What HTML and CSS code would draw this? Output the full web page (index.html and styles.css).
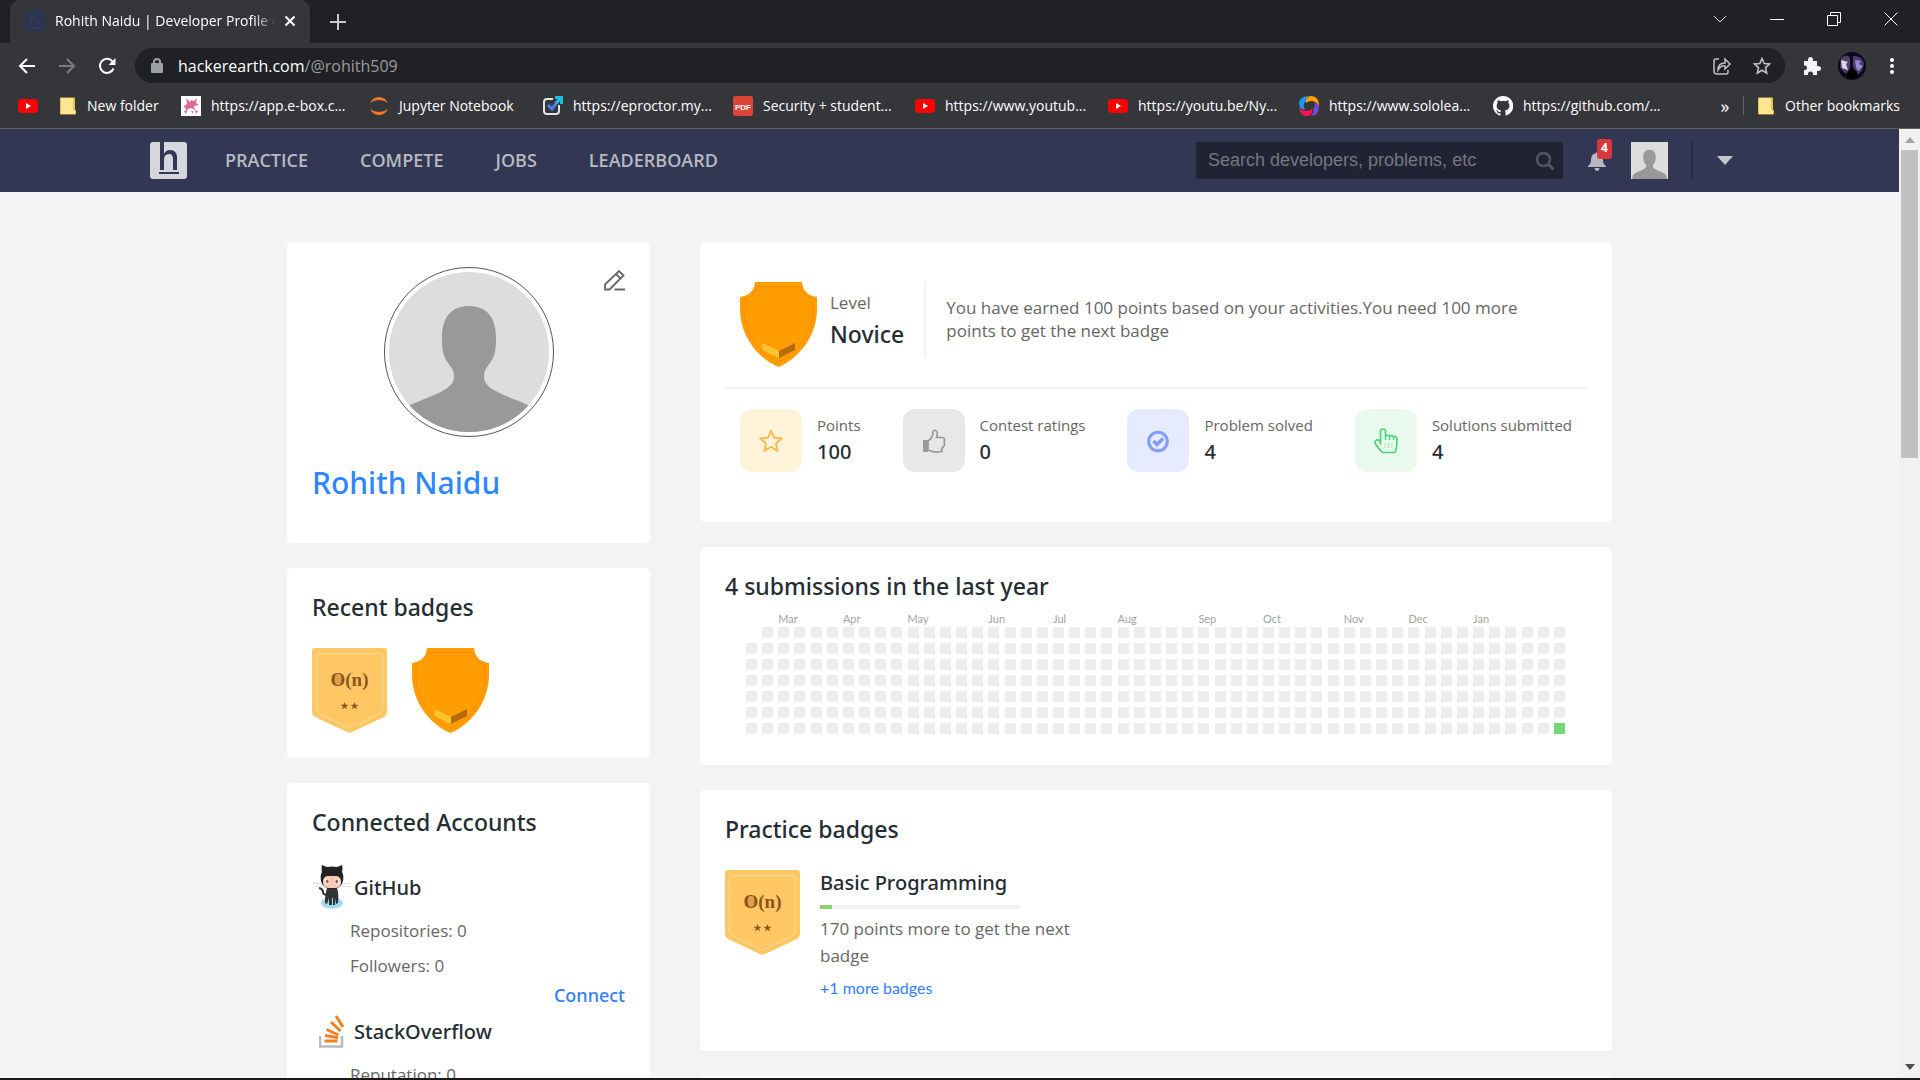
FILE: index.html
```html
<!DOCTYPE html>
<html lang="en">
<head>
<meta charset="utf-8">
<title>Rohith Naidu | Developer Profile</title>
<link rel="stylesheet" href="styles.css">
</head>
<body>
<svg class="defs" aria-hidden="true">
  <symbol id="youtube" viewBox="0 0 20 20"><rect y="3" width="20" height="14" rx="4" fill="#f00"/><path d="M8 7l5 3-5 3z" fill="#fff"/></symbol>
  <symbol id="folder" viewBox="0 0 16 18"><path d="M1 .5h13q1 0 1 1v11l1 1v3q0 1-1 1H1q-1 0-1-1v-15q0-1 1-1z" fill="#e8c34c"/><path d="M1 1h12v16H1z" fill="#ffe693"/><path d="M12.500 13h2.500v4h-2.500z" fill="#ffe693"/></symbol>
  <symbol id="person" viewBox="0 0 160 160"><path fill="#ddd" d="M0 0h160v160H0z"/><path fill="#999" d="M80 34c-20 0-27 14-27 32 0 12 1 18 6 25s6 8 6 14c0 12-18 17-44 28C10 138 6 146 5 160h150c-1-14-5-22-16-27-26-11-44-16-44-28 0-6 1-7 6-14s6-13 6-25c0-18-7-32-27-32z"/></symbol>
  <symbol id="shield" viewBox="0 0 77 85"><path fill="#ff9d03" d="M15 0h47q1 13 15 15v12c0 26-17 49-38.500 58C17 76 0 53 0 27V15Q14 13 15 0z"/><path fill="none" stroke="#f08f04" d="M17 4.500h43q2 10 13 12.500v11c0 23-15 43-34.500 52.500C19 71 4 51 4 28V17q11-2 13-12.500z"/><path fill="#f9c332" d="M22.500 61L39 69v7l-16.500-8z"/><path fill="#b66b08" d="M55 61l-16 8v7l16-8z"/></symbol>
  <symbol id="on-badge" viewBox="0 0 75 85"><path fill="#ffc664" d="M3 0h69q3 0 3 3v61q0 3-3 5L40 84q-2.500 1.500-5 0L3 69q-3-2-3-5V3q0-3 3-3z"/><path fill="none" stroke="#ffdc9c" d="M8 5.500h59q3.500 0 3.500 3.500v51q0 4-3.500 6L37.500 80 8 66q-3.500-2-3.500-6V9q0-3.500 3.500-3.500z"/><path fill="#e0a04a" d="M25 26q4 0 4 6t-4 6-4-6 4-6z"/><text x="37.500" y="38" text-anchor="middle" class="badge-text">O(n)</text><path fill="#8a561b" d="M32.500 54l1 2.800h3l-2.400 1.700.9 2.800-2.500-1.700-2.500 1.700.9-2.800-2.400-1.700h3zM42.500 54l1 2.800h3l-2.400 1.700.9 2.800-2.500-1.700-2.500 1.700.9-2.800-2.400-1.700h3z"/></symbol>
</svg>

<div class="tabstrip">
  <div class="tab">
    <svg class="favicon" viewBox="0 0 20 20"><rect width="20" height="20" rx="2" fill="#2c3454"/><path d="M6.500 2v12M6.500 9q0-3 3.500-3t3.500 3v5M6 17h8" fill="none" stroke="#363a4c" stroke-width="2"/></svg>
    <span class="tab-title">Rohith Naidu | Developer Profile on</span>
    <button class="plain" aria-label="Close tab"><svg width="12" height="12" viewBox="0 0 12 12"><path d="M1.500 1.500l9 9m0-9l-9 9" stroke="#fff" stroke-width="2"/></svg></button>
  </div>
  <button class="plain new-tab" aria-label="New tab"><svg width="16" height="16" viewBox="0 0 16 16"><path d="M8 0v16M0 8h16" stroke="#c8cacd" stroke-width="2"/></svg></button>
  <div class="window-controls">
    <button class="plain" aria-label="Search tabs"><svg width="14" height="14" viewBox="0 0 14 14"><path d="M1 4l6 6 6-6" fill="none" stroke="#ddd"/></svg></button>
    <button class="plain" aria-label="Minimize"><svg width="14" height="14" viewBox="0 0 14 14"><path d="M0 7.500h14" stroke="#fff"/></svg></button>
    <button class="plain" aria-label="Restore"><svg width="14" height="14" viewBox="0 0 14 14"><path d="M.5 3.500h10v10H.5zM3.500 3V.5h10v10H11" fill="none" stroke="#fff"/></svg></button>
    <button class="plain" aria-label="Close"><svg width="14" height="14" viewBox="0 0 14 14"><path d="M.5.500l13 13m0-13l-13 13" stroke="#fff"/></svg></button>
  </div>
</div>

<div class="toolbar">
  <div class="nav-buttons">
    <button class="plain" aria-label="Back"><svg width="18" height="16" viewBox="0 0 18 16"><path d="M17 8H2m7-7L2 8l7 7" fill="none" stroke="#fff" stroke-width="2"/></svg></button>
    <button class="plain" aria-label="Forward"><svg width="18" height="16" viewBox="0 0 18 16"><path d="M1 8h15M9 1l7 7-7 7" fill="none" stroke="#7c7e81" stroke-width="2"/></svg></button>
    <button class="plain" aria-label="Reload"><svg width="18" height="18" viewBox="0 0 18 18"><path d="M15.500 11.500A7 7 0 1 1 14.500 4.500" fill="none" stroke="#fff" stroke-width="2"/><path d="M17.500 1v7h-7z" fill="#fff"/></svg></button>
  </div>
  <div class="omnibox">
    <svg width="12" height="16" viewBox="0 0 12 16"><rect y="5" width="12" height="10" rx="1" fill="#9aa0a6"/><path d="M3 6V4q0-3 3-3t3 3v2" fill="none" stroke="#9aa0a6" stroke-width="2"/></svg>
    <span class="url">hackerearth.com<span class="path">/@rohith509</span></span>
    <button class="plain" aria-label="Share"><svg width="20" height="18" viewBox="0 0 20 18"><path d="M7 2H4Q2 2 2 4v10q0 3 3 3h9q2 0 2-2v-2M6 13q0-7 7-7V2l5 5-5 5V9q-4-1-7 4z" fill="none" stroke="#bdc1c6" stroke-width="1.500"/></svg></button>
    <button class="plain" aria-label="Bookmark this page"><svg width="18" height="18" viewBox="0 0 18 18"><path d="M9 1.500l2.200 5 5.300.5-4 3.600 1.200 5.400L9 13.200 4.300 16l1.200-5.400-4-3.600 5.300-.5z" fill="none" stroke="#bdc1c6" stroke-width="1.600"/></svg></button>
  </div>
  <button class="plain" aria-label="Extensions"><svg width="20" height="20" viewBox="0 0 20 20"><path d="M2 5h4V4q0-3 2.500-3T11 4v1h4v5h1q3 0 3 2.500T16 15h-1v4h-4v-1q0-2.500-2.500-2.500T6 18v1H2v-5h1q2 0 2-2.200T3 9.500H2z" fill="#f1f3f4"/></svg></button>
  <button class="plain" aria-label="Account"><svg width="28" height="28" viewBox="0 0 28 28"><circle cx="14" cy="14" r="14" fill="#0e0a1c"/><path d="M3 6q6-5 9 0v9q-1 7-5 6l-5-5z" fill="#4b4468"/><path d="M3 8l7 2-2 2 2 6-6-2z" fill="#e4d3e6"/><path d="M15 4q8-1 11 7-1 10-8 12l-3-9z" fill="#4b3d7c"/><path d="M17 8l6 1-2 3 4 2-5 5-2-4z" fill="#9a8ccc"/><path d="M9 27q-1-10 5-10t6 9z" fill="#000"/></svg></button>
  <button class="plain" aria-label="Menu"><svg width="4" height="16" viewBox="0 0 4 16"><circle cx="2" cy="2" r="2" fill="#fff"/><circle cx="2" cy="8" r="2" fill="#fff"/><circle cx="2" cy="14" r="2" fill="#fff"/></svg></button>
</div>

<nav class="bookmarks" aria-label="Bookmarks">
  <a href="#" aria-label="YouTube"><svg><use href="#youtube"/></svg></a>
  <a href="#"><svg class="folder"><use href="#folder"/></svg>New folder</a>
  <a href="#"><svg viewBox="0 0 20 20"><path fill="#fff" d="M0 0h20v20H0z"/><path d="M5 2l4 4 1-2 3 1 3-3-1 5 3 2-5 1 1 4-4-2-3 1-3 4 1-5-3-1 4-3zM14 14l3 1-2 3zM3 15h3l-1 3zM10 15h2v3z" fill="#dd6c90"/></svg>https://app.e-box.c...</a>
  <a href="#"><svg viewBox="0 0 20 20"><path d="M1 7Q4 1 10 1t9 6q-4-3-9-3T1 7zM1 13q3 6 9 6t9-6q-4 3-9 3t-9-3z" fill="#f37726"/></svg>Jupyter Notebook</a>
  <a href="#"><svg viewBox="0 0 20 20"><path d="M10 3H4Q1 3 1 6v9q0 3 3 3h9q3 0 3-3V9" fill="none" stroke="#e4e4e6" stroke-width="2"/><path d="M5 9l4 4 6-8" fill="none" stroke="#507bed" stroke-width="3"/><path d="M12 0h8v8h-3V5l-3 3-2-2 3-3h-3z" fill="#19c3e8"/></svg>https://eproctor.my...</a>
  <a href="#"><svg viewBox="0 0 20 20"><rect width="20" height="20" rx="2" fill="#db4437"/><text x="10" y="14" text-anchor="middle" class="pdf-text">PDF</text></svg>Security + student...</a>
  <a href="#"><svg><use href="#youtube"/></svg>https://www.youtub...</a>
  <a href="#"><svg><use href="#youtube"/></svg>https://youtu.be/Ny...</a>
  <a href="#"><svg viewBox="0 0 20 20"><path d="M9 0Q0 1 0 7.500q0 5 6 6.500-3-6 1-9 0-3 2-5z" fill="#2196f3"/><path d="M7 4q1-4 5-4 7 0 8 8v2q-3-5-8-5-3 0-5 2z" fill="#ffa000"/><path d="M15 7q5 0 5 5 0 7-8 8 3-3 2-7 3-3 1-6z" fill="#7248d2"/><path d="M0 11q3 4 7 4 4 0 6-2 1 7-5 7-7 0-8-9z" fill="#ff1156"/></svg>https://www.sololea...</a>
  <a href="#"><svg viewBox="0 0 16 16"><path fill="#fff" d="M8 0C3.580 0 0 3.580 0 8c0 3.540 2.290 6.530 5.470 7.590.4.070.55-.17.55-.38v-1.340c-2.230.48-2.690-1.070-2.690-1.070-.36-.92-.89-1.170-.89-1.170-.73-.5.050-.49.050-.49.810.060 1.230.83 1.230.83.720 1.230 1.890.87 2.350.67.070-.52.280-.87.510-1.070-1.780-.2-3.640-.89-3.640-3.950 0-.87.310-1.590.820-2.150-.08-.2-.36-1.020.080-2.120 0 0 .67-.21 2.200.82a7.600 7.600 0 0 1 4 0c1.530-1.040 2.200-.82 2.200-.82.440 1.100.160 1.920.080 2.120.510.560.820 1.270.820 2.150 0 3.070-1.870 3.750-3.650 3.950.290.250.540.730.540 1.480v2.200c0 .21.150.46.550.38A8 8 0 0 0 8 0z"/></svg>https://github.com/...</a>
  <button class="plain more" aria-label="More bookmarks">»</button>
  <a href="#" class="other"><svg class="folder"><use href="#folder"/></svg>Other bookmarks</a>
</nav>

<div class="viewport">
  <div class="page">
    <header class="site-header">
      <a href="#" class="logo" aria-label="HackerEarth"><svg width="37" height="37" viewBox="0 0 37 37"><rect width="37" height="37" rx="3" fill="#d6d7de"/><path d="M10 0h4v12q2-4 6-4 7 0 7 8v12h-4V17q0-5-4-5-5 0-5 6v10h-4z" fill="#323754"/><path d="M9 30h20v2H9z" fill="#323754"/></svg></a>
      <nav class="site-nav"><a href="#">PRACTICE</a><a href="#">COMPETE</a><a href="#">JOBS</a><a href="#">LEADERBOARD</a></nav>
      <form class="search">
        <input type="text" aria-label="Search" placeholder="Search developers, problems, etc">
        <button class="plain" type="button" aria-label="Submit search"><svg width="20" height="20" viewBox="0 0 20 20"><circle cx="8.500" cy="8.500" r="6.500" fill="none" stroke="#4e5864" stroke-width="2.500"/><path d="M13 13l5.500 5.500" stroke="#4e5864" stroke-width="3"/></svg></button>
      </form>
      <button class="plain bell" aria-label="Notifications"><svg width="18" height="20" viewBox="0 0 18 20"><path d="M9 1q1 0 1.500 1.500Q15 3 15 9q0 4 3 6v1H0v-1q3-2 3-6 0-6 4.500-6.500Q8 1 9 1zM6.500 17h5q-.5 3-2.500 3t-2.500-3z" fill="#b7b9c2"/></svg><span class="count">4</span></button>
      <a href="#" class="me" aria-label="My profile"><svg width="37" height="37"><use href="#person"/></svg></a>
      <button class="plain caret" aria-label="Account menu"><svg width="16" height="9" viewBox="0 0 16 9"><path d="M0 0h16L8 9z" fill="#c4c6cd"/></svg></button>
    </header>

    <main class="columns">
      <div class="left">
        <section class="card profile">
          <div class="portrait"><svg><use href="#person"/></svg></div>
          <button class="plain edit" aria-label="Edit profile"><svg width="21" height="21" viewBox="0 0 21 21"><path d="M1 19.500v-5L15 1l4.500 4.500-14 14zM12 4l4.500 4.500M10.500 19.500H21" fill="none" stroke="#666" stroke-width="1.800"/></svg></button>
          <h1>Rohith Naidu</h1>
        </section>
        <section class="card">
          <h2>Recent badges</h2>
          <div class="badges"><svg width="75" height="85"><use href="#on-badge"/></svg><svg width="77" height="85"><use href="#shield"/></svg></div>
        </section>
        <section class="card accounts">
          <h2>Connected Accounts</h2>
          <h3><span class="account-icon"><svg width="38" height="44" viewBox="0 0 38 44"><ellipse cx="19" cy="38" rx="11" ry="5.500" fill="#9cdaf1"/><path d="M0 18l9 1M0 22l9-1M38 18l-9 1M38 22l-9-1" stroke="#ddd"/><path d="M6 23q4 1 4 4t5 3" fill="none" stroke="#333" stroke-width="2"/><path d="M14 23h10q2 6 1 15l-2 1-1-6v7h-2v-7h-1v7h-3v-7l-2 6-2-1q0-9 2-15z" fill="#333"/><path d="M9 0l5 2q5-1 10 0l5-2q1 4 0 7 2 3 1 9-2 8-11 8T8 16q-1-6 1-9-1-3 0-7z" fill="#222"/><rect x="10" y="11" width="18" height="12" rx="5" fill="#f4cbb2"/><ellipse cx="14" cy="16.500" rx="2" ry="3" fill="#fff"/><ellipse cx="24" cy="16.500" rx="2" ry="3" fill="#fff"/><ellipse cx="14.300" cy="16.500" rx="1.300" ry="2" fill="#a35757"/><ellipse cx="23.700" cy="16.500" rx="1.300" ry="2" fill="#a35757"/></svg></span>GitHub</h3>
          <p>Repositories: 0</p>
          <p>Followers: 0</p>
          <a href="#" class="connect">Connect</a>
          <h3><span class="account-icon"><svg width="26" height="33" viewBox="0 0 26 33"><path d="M1 21v10.500h22V21" fill="none" stroke="#bcbbbb" stroke-width="2.500"/><path d="M5.500 26h13M6 20.500l13 2.200M7.500 14.500l12 5.500M12 7l9.500 9M17 1l7 11" stroke="#f48024" stroke-width="3"/></svg></span>StackOverflow</h3>
          <p>Reputation: 0</p>
        </section>
      </div>

      <div class="right">
        <section class="card summary">
          <div class="level">
            <svg width="77" height="85"><use href="#shield"/></svg>
            <div class="level-name"><span>Level</span><strong>Novice</strong></div>
            <p>You have earned 100 points based on your activities.You need 100 more points to get the next badge</p>
          </div>
          <dl class="stats">
            <div class="stat">
              <span class="tile star"><svg width="24" height="24" viewBox="0 0 24 24"><path d="M12 2l3.100 6.700 7.400.8-5.500 5 1.500 7.300-6.500-3.700-6.500 3.700L7 14.500l-5.500-5 7.400-.8z" fill="none" stroke="#fdb43f" stroke-width="1.700"/></svg></span>
              <div><dt>Points</dt><dd>100</dd></div>
            </div>
            <div class="stat">
              <span class="tile thumb"><svg width="24" height="24" viewBox="0 0 24 24"><path d="M1 11h5v12H1z" fill="#999"/><path d="M6 12q5-3 5-9 0-2 2.500-1.500 3 1 1 7H20q3 0 2.500 3-.5 1 0 3T21 18t-1 3-3 2Q11 23.500 6 21z" fill="none" stroke="#999" stroke-width="1.700"/></svg></span>
              <div><dt>Contest ratings</dt><dd>0</dd></div>
            </div>
            <div class="stat">
              <span class="tile check"><svg width="24" height="24" viewBox="0 0 24 24"><circle cx="12" cy="12.500" r="9.300" fill="none" stroke="#829cff" stroke-width="3"/><path d="M7.500 12l3.500 3.500 6-6" fill="none" stroke="#829cff" stroke-width="3.500"/></svg></span>
              <div><dt>Problem solved</dt><dd>4</dd></div>
            </div>
            <div class="stat">
              <span class="tile hand"><svg width="24" height="26" viewBox="0 0 24 26"><path d="M6.500 16V3q0-2 2.500-2t2.500 2v5q3-1.500 4 0 3-1 4 .5 4-.5 3.500 3.500 0 8-2 12.500H8.500Q4 20 1.500 16 0 12.500 3 12t3.500 4z" fill="none" stroke="#4bd576" stroke-width="1.700" stroke-linejoin="round"/><path d="M11.500 8v4m4-4v4m4-3.500V12" stroke="#4bd576" stroke-width="1.500"/><path d="M11 15v5m3.500-5v5m3.500-5v5" stroke="#a8e8bb"/></svg></span>
              <div><dt>Solutions submitted</dt><dd>4</dd></div>
            </div>
          </dl>
        </section>

        <section class="card">
          <h2>4 submissions in the last year</h2>
          <div class="calendar" id="calendar"></div>
        </section>

        <section class="card practice">
          <h2>Practice badges</h2>
          <div class="practice-badge">
            <svg width="75" height="85"><use href="#on-badge"/></svg>
            <div class="practice-info">
              <h3>Basic Programming</h3>
              <div class="progress"><div style="width:6%"></div></div>
              <p>170 points more to get the next badge</p>
              <a href="#">+1 more badges</a>
            </div>
          </div>
        </section>
        <section class="card next"></section>
      </div>
    </main>
  </div>
  <div class="scrollbar" aria-hidden="true">
    <svg width="10" height="6" viewBox="0 0 10 6"><path d="M0 6h10L5 0z" fill="#a3a3a3"/></svg>
    <div class="thumb-bar"></div>
    <svg width="10" height="6" viewBox="0 0 10 6"><path d="M0 0h10L5 6z" fill="#505050"/></svg>
  </div>
</div>
<script src="calendar.js"></script>
</body>
</html>
```
FILE: calendar.js
```js
const months = { 2: "Mar", 6: "Apr", 10: "May", 15: "Jun", 19: "Jul", 23: "Aug", 28: "Sep", 32: "Oct", 37: "Nov", 41: "Dec", 45: "Jan" };
const weeks = 51;
const calendar = document.getElementById("calendar");

for (let week = 0; week < weeks; week++) {
  const column = document.createElement("div");
  column.className = "week";
  const label = document.createElement("span");
  label.textContent = months[week] || "";
  column.append(label);
  for (let day = 0; day < 7; day++) {
    const cell = document.createElement("i");
    if (week === 0 && day === 0) cell.className = "outside";
    if (week === weeks - 1 && day === 6) cell.className = "active";
    column.append(cell);
  }
  calendar.append(column);
}
```
FILE: styles.css
```css
* { box-sizing: border-box; margin: 0; padding: 0; }
body {
  height: 100vh;
  display: flex;
  flex-direction: column;
  overflow: hidden;
  border-bottom: 2px solid #1c181b;
  font-family: "Open Sans", "Noto Sans", sans-serif;
  color: #252c33;
  background: #f3f3f6;
}
a { color: inherit; text-decoration: none; }
svg { display: block; flex: none; }
.defs { position: absolute; width: 0; height: 0; }
.plain { display: flex; align-items: center; justify-content: center; flex: none; border: 0; background: none; color: inherit; font: inherit; }

/* browser window */
.tabstrip { display: flex; flex: none; height: 43px; padding-left: 10px; background: #202124; }
.tab { display: flex; align-items: center; width: 300px; padding: 0 14px 2px 15px; border-radius: 10px 10px 0 0; background: #35363a; color: #fff; }
.favicon { width: 20px; height: 20px; margin-right: 10px; }
.tab-title {
  flex: 1;
  overflow: hidden;
  margin-right: 8px;
  font-size: 14px;
  white-space: nowrap;
  -webkit-mask-image: linear-gradient(90deg, #000 90%, transparent);
  mask-image: linear-gradient(90deg, #000 90%, transparent);
}
.new-tab { width: 56px; }
.window-controls { display: flex; height: 37px; margin: 0 1px 0 auto; }
.window-controls .plain { width: 57px; }

.toolbar { display: flex; align-items: center; flex: none; height: 45px; padding-right: 8px; background: #35363a; }
.nav-buttons { display: flex; width: 135px; padding-left: 7px; }
.nav-buttons .plain { width: 40px; }
.omnibox { display: flex; align-items: center; flex: 1; height: 35px; margin-right: 7px; padding: 0 3px 0 16px; border-radius: 18px; background: #202124; }
.omnibox .plain { width: 40px; }
.url { flex: 1; padding-left: 15px; font-size: 16px; color: #fff; }
.path { color: #9a9b9d; }
.toolbar > .plain { width: 40px; }

.bookmarks {
  display: grid;
  grid-template-columns: 42px 121px 188px 174px 190px 182px 193px 191px 194px 1fr 36px 160px;
  align-items: center;
  flex: none;
  height: 41px;
  padding: 0 17px 5px 18px;
  border-bottom: 1px solid #5f6063;
  background: #35363a;
  color: #fff;
  font-size: 14px;
}
.bookmarks a { display: flex; align-items: center; gap: 10px; white-space: nowrap; }
.bookmarks svg { width: 20px; height: 20px; }
.bookmarks .folder { width: 16px; height: 18px; margin-right: 1px; }
.bookmarks .more { font-size: 18px; line-height: 20px; }
.bookmarks .other { padding-left: 14px; border-left: 1px solid #606164; }
.pdf-text { font: bold 8px "Liberation Sans", sans-serif; fill: #fff; }

/* page */
.viewport { display: flex; flex: 1; min-height: 0; }
.page { flex: 1; overflow: hidden; }
.scrollbar { display: flex; flex-direction: column; align-items: center; width: 21px; padding: 8px 2px; background: #f1f1f1; }
.thumb-bar { width: 17px; height: 308px; margin: 7px 0 auto; background: #c1c1c1; }

.site-header { display: flex; align-items: center; height: 63px; padding: 0 166px 0 150px; background: #323754; }
.site-nav { display: flex; gap: 52px; padding: 0 0 2px 38px; color: #b7b9c2; font-size: 18px; font-weight: 600; }
.search { display: flex; align-items: center; width: 367px; height: 37px; margin-left: auto; padding: 0 8px 0 12px; border-radius: 2px; background: #212234; }
.search input { flex: 1; min-width: 0; border: 0; outline: 0; background: none; color: #ddd; font: 18px "Liberation Sans", sans-serif; }
.search input::placeholder { color: #777780; opacity: 1; }
.bell { position: relative; width: 34px; height: 37px; margin-left: 17px; }
.count { position: absolute; top: -3px; left: 17px; width: 15px; height: 20px; border-radius: 3px; background: #d9363e; color: #fff; font-size: 12px; font-weight: 700; line-height: 18px; }
.me { margin-left: 17px; padding-right: 23px; border-right: 2px solid #272b40; }
.caret { margin-left: 24px; width: 16px; }

.columns { display: grid; grid-template-columns: 363fr 912fr; gap: 50px; width: 1325px; max-width: 100%; margin: 50px auto 0; }
.left, .right { display: flex; flex-direction: column; gap: 25px; min-width: 0; }
.card { padding: 25px; border-radius: 5px; background: #fff; }
h1, h2, h3, strong, dd, .connect { font-family: "Noto Sans", "Open Sans", sans-serif; font-weight: 500; }
h2 { font-size: 23px; line-height: 28px; margin-bottom: 27px; }
h3 { font-size: 20px; }

.profile { position: relative; }
.portrait { width: 170px; margin: 0 auto 25px; padding: 4px; border: 1px solid #555; border-radius: 50%; }
.portrait svg { width: 160px; height: 160px; border-radius: 50%; }
.edit { position: absolute; top: 28px; right: 25px; }
h1 { color: #2f87ff; font-size: 30px; line-height: 42px; margin-bottom: 14px; }
.badges { display: flex; gap: 25px; }
.badge-text { font: bold 19px "Liberation Serif", serif; fill: #8a561b; }

.accounts h3 { display: flex; align-items: center; gap: 2px; height: 48px; margin-bottom: 2px; }
.account-icon { display: flex; justify-content: center; width: 40px; }
.accounts p { padding-left: 38px; color: #666; font-size: 17px; line-height: 35px; }
.connect { display: block; color: #2f7fff; font-size: 18px; line-height: 24px; text-align: right; }

.summary { padding-bottom: 50px; }
.level { display: flex; padding: 15px 15px 20px; border-bottom: 2px solid #f2f2f7; }
.level-name { display: flex; flex-direction: column; justify-content: center; gap: 3px; height: 75px; margin: 0 20px 0 13px; padding: 2px 20px 0 0; border-right: 2px solid #f2f2f7; }
.level-name span { color: #666; font-size: 17px; line-height: 24px; }
.level-name strong { font-size: 23px; line-height: 32px; }
.level p { flex: 1; align-self: flex-start; padding: 14px 20px 0 0; color: #666; font-size: 17px; line-height: 23px; }
.stats { display: flex; gap: 42px; padding: 20px 15px 0; }
.stat { display: flex; align-items: center; gap: 15px; white-space: nowrap; }
.tile { display: flex; align-items: center; justify-content: center; width: 62px; height: 63px; border-radius: 12px; }
.star { background: #fff4d9; }
.thumb { background: #e7e8ea; }
.check { background: #e6ebff; }
.hand { background: #eafaef; }
dt { color: #666; font-size: 15px; line-height: 22px; }
dd { font-size: 20px; line-height: 32px; }

.calendar { display: flex; justify-content: space-between; margin: -15px 22px 6px 21px; }
.week { display: flex; flex-direction: column; gap: 5px; width: 11px; }
.week span { height: 10px; overflow: visible; color: #a3a3a3; font: 11px/14px Lato, sans-serif; white-space: nowrap; }
.week i { height: 11px; background: #ededed; }
.week .outside { background: none; }
.week .active { background: #73d877; }

.practice { padding-bottom: 51px; }
.practice-badge { display: flex; gap: 20px; }
.practice-info { width: 275px; }
.practice-info h3 { line-height: 26px; }
.progress { width: 200px; height: 4px; margin: 9px 0 6px; background: #f1f1f6; }
.progress div { height: 100%; background: #86d36f; }
.practice-info p { margin-bottom: 7px; color: #666; font-size: 17px; line-height: 27px; }
.practice-info a { display: block; color: #2f7fff; font: 16px/24px Lato, sans-serif; }
.next { min-height: 50px; }
```
